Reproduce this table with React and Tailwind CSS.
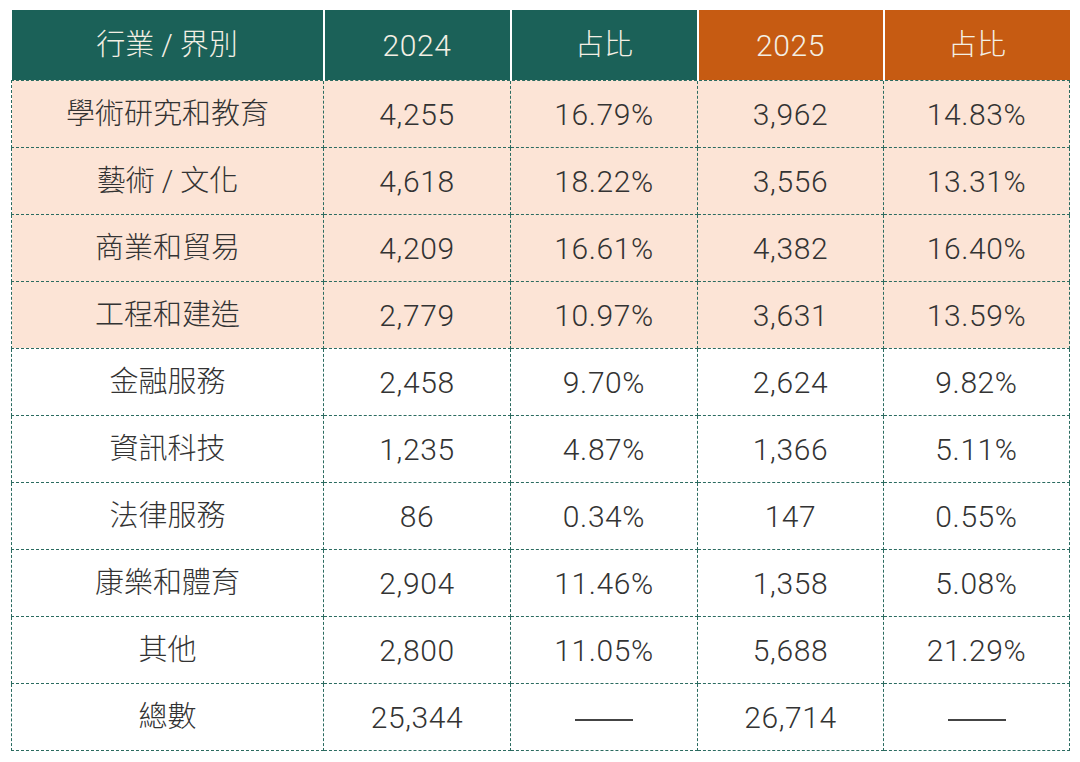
const ROWS = [
  { name: '學術研究和教育', a: '4,255', ap: '16.79%', b: '3,962', bp: '14.83%', hl: true },
  { name: '藝術 / 文化', a: '4,618', ap: '18.22%', b: '3,556', bp: '13.31%', hl: true },
  { name: '商業和貿易', a: '4,209', ap: '16.61%', b: '4,382', bp: '16.40%', hl: true },
  { name: '工程和建造', a: '2,779', ap: '10.97%', b: '3,631', bp: '13.59%', hl: true },
  { name: '金融服務', a: '2,458', ap: '9.70%', b: '2,624', bp: '9.82%' },
  { name: '資訊科技', a: '1,235', ap: '4.87%', b: '1,366', bp: '5.11%' },
  { name: '法律服務', a: '86', ap: '0.34%', b: '147', bp: '0.55%' },
  { name: '康樂和體育', a: '2,904', ap: '11.46%', b: '1,358', bp: '5.08%' },
  { name: '其他', a: '2,800', ap: '11.05%', b: '5,688', bp: '21.29%' },
  { name: '總數', a: '25,344', ap: null, b: '26,714', bp: null },
];

const font = { fontFamily: 'Roboto, "Noto Sans CJK TC", sans-serif' };

// 空白格用一條細橫線代替
const Dash = () => <span className="inline-block w-[58px] h-[1.5px] bg-[#444] align-middle" />;

export default function App() {
  const td = 'h-[67px] border border-dashed border-[#2b6b60] text-center align-middle p-0 pt-[2px]';
  const num = `${td} text-[30px] tracking-[0.6px]`;
  const th = 'h-[70px] text-center align-middle font-light p-0 pt-[2px] text-[#f3efe4]';
  return (
    <div className="bg-white w-[1080px] h-[762px] pt-[10px] pl-[11px]" style={font}>
      <table className="table-fixed border-collapse w-[1058px] text-[29px] font-light text-[#333333]">
        <colgroup>
          <col className="w-[312px]" />
          <col className="w-[187px]" />
          <col className="w-[187px]" />
          <col className="w-[186px]" />
          <col className="w-[186px]" />
        </colgroup>
        <thead>
          <tr>
            <th className={`${th} bg-[#1b6158] border-r-2 border-white`}>行業 / 界別</th>
            <th className={`${th} bg-[#1b6158] border-r-2 border-white text-[30px] tracking-[0.6px]`}>2024</th>
            <th className={`${th} bg-[#1b6158] border-r-2 border-white`}>占比</th>
            <th className={`${th} bg-[#c65b12] border-r-2 border-white text-[30px] tracking-[0.6px]`}>2025</th>
            <th className={`${th} bg-[#c65b12]`}>占比</th>
          </tr>
        </thead>
        <tbody>
          {ROWS.map((r) => (
            <tr key={r.name} className={r.hl ? 'bg-[#fce4d6]' : 'bg-white'}>
              <td className={td}>{r.name}</td>
              <td className={num}>{r.a}</td>
              <td className={num}>{r.ap ?? <Dash />}</td>
              <td className={num}>{r.b}</td>
              <td className={num}>{r.bp ?? <Dash />}</td>
            </tr>
          ))}
        </tbody>
      </table>
    </div>
  );
}
